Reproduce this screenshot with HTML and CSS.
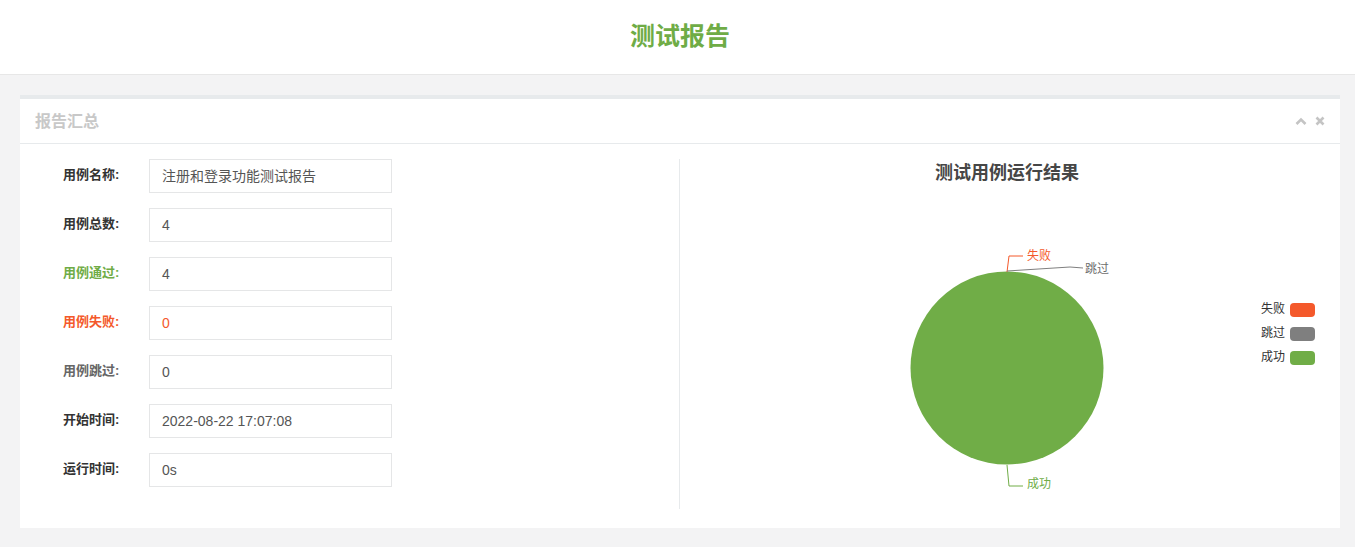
FILE: index.html
```html
<!DOCTYPE html>
<html lang="zh-CN">
<head>
<meta charset="utf-8">
<title>测试报告</title>
<link rel="stylesheet" href="styles.css">
</head>
<body>
<header class="top">
  <h1 class="top-title">测试报告</h1>
</header>
<main class="content">
  <section class="panel">
    <div class="panel-head">
      <h2 class="panel-title">报告汇总</h2>
      <div class="panel-tools">
        <svg class="tool" width="12" height="10" viewBox="0 0 12 10"><path d="M1.5 8 L6 3.5 L10.5 8" fill="none" stroke="#c4c4c4" stroke-width="2.6"/></svg>
        <svg class="tool" width="10" height="10" viewBox="0 0 10 10"><path d="M1.5 1.5 L8.5 8.5 M8.5 1.5 L1.5 8.5" fill="none" stroke="#c4c4c4" stroke-width="2.6"/></svg>
      </div>
    </div>
    <div class="panel-body">
      <div class="form-col">
        <div class="row"><label class="lbl">用例名称:</label><div class="field">注册和登录功能测试报告</div></div>
        <div class="row"><label class="lbl">用例总数:</label><div class="field">4</div></div>
        <div class="row"><label class="lbl lbl-pass">用例通过:</label><div class="field">4</div></div>
        <div class="row"><label class="lbl lbl-fail">用例失败:</label><div class="field field-fail">0</div></div>
        <div class="row"><label class="lbl lbl-skip">用例跳过:</label><div class="field">0</div></div>
        <div class="row"><label class="lbl">开始时间:</label><div class="field">2022-08-22 17:07:08</div></div>
        <div class="row"><label class="lbl">运行时间:</label><div class="field">0s</div></div>
      </div>
      <div class="divider"></div>
      <div class="chart-col">
        <svg class="chart" width="660" height="384" viewBox="0 0 660 384">
          <text class="chart-title" x="327" y="29" text-anchor="middle" dominant-baseline="central">测试用例运行结果</text>
          <circle cx="327" cy="224" r="96.5" fill="#70ad47"/>
          <polyline points="327,128 329,112 343,112" fill="none" stroke="#f4592b" stroke-width="1"/>
          <text class="pie-lbl" x="347" y="112" fill="#f4592b" dominant-baseline="central">失败</text>
          <polyline points="327,127 390,123 403,124" fill="none" stroke="#7f7f7f" stroke-width="1"/>
          <text class="pie-lbl" x="405" y="125" fill="#6d6d6d" dominant-baseline="central">跳过</text>
          <polyline points="327,321 329,342 343,342" fill="none" stroke="#70ad47" stroke-width="1"/>
          <text class="pie-lbl" x="347" y="340" fill="#70ad47" dominant-baseline="central">成功</text>
          <text class="legend" x="605" y="165" text-anchor="end" dominant-baseline="central">失败</text>
          <rect x="610" y="159" width="25" height="14" rx="4" fill="#f4592b"/>
          <text class="legend" x="605" y="189" text-anchor="end" dominant-baseline="central">跳过</text>
          <rect x="610" y="183" width="25" height="14" rx="4" fill="#7f7f7f"/>
          <text class="legend" x="605" y="213" text-anchor="end" dominant-baseline="central">成功</text>
          <rect x="610" y="207" width="25" height="14" rx="4" fill="#70ad47"/>
        </svg>
      </div>
    </div>
  </section>
</main>
</body>
</html>
```
FILE: styles.css
```css
* { box-sizing: border-box; }
html, body { margin: 0; padding: 0; }
body {
  background: #f3f3f4;
  font-family: "Liberation Sans", "Noto Sans CJK SC", sans-serif;
  color: #555;
  overflow: hidden;
}
.top {
  height: 75px;
  background: #fff;
  border-bottom: 1px solid #e7e7e7;
  display: flex;
  align-items: center;
  justify-content: center;
}
.top-title {
  margin: 0;
  font-size: 25px;
  font-weight: bold;
  color: #6fac46;
  line-height: 1;
  padding-bottom: 2px;
  padding-left: 5px;
}
.content {
  padding: 20px 15px 0 20px;
}
.panel {
  background: #fff;
  border-top: 4px solid #e7eaec;
}
.panel-head {
  height: 45px;
  border-bottom: 1px solid #e7eaec;
  display: flex;
  align-items: center;
  justify-content: space-between;
  padding: 0 15px;
}
.panel-title {
  margin: 0;
  font-size: 16px;
  font-weight: bold;
  color: #c8c8c8;
  line-height: 1;
  padding-top: 2px;
}
.panel-tools {
  display: flex;
  align-items: center;
  gap: 8px;
}
.tool { display: block; }
.panel-body {
  display: flex;
  height: 384px;
}
.form-col {
  width: 659px;
  padding: 15px 0 0 43px;
  display: flex;
  flex-direction: column;
  gap: 15px;
}
.row {
  display: flex;
  align-items: flex-start;
}
.lbl {
  width: 86px;
  font-size: 13px;
  font-weight: bold;
  color: #333;
  line-height: 20px;
  padding-top: 6px;
}
.lbl-pass { color: #6fac46; }
.lbl-fail { color: #f4592b; }
.lbl-skip { color: #666; }
.field {
  width: 243px;
  height: 34px;
  border: 1px solid #e5e6e7;
  padding: 0 12px;
  font-size: 14px;
  line-height: 32px;
  color: #555;
}
.field-fail { color: #f4592b; }
.divider {
  width: 1px;
  background: #e7eaec;
  margin: 15px 0 19px;
}
.chart-col {
  flex: 1;
}
.chart { display: block; }
.chart-title {
  font-size: 18px;
  font-weight: bold;
  fill: #464646;
}
.pie-lbl { font-size: 12px; }
.legend { font-size: 12px; fill: #333; }
```
